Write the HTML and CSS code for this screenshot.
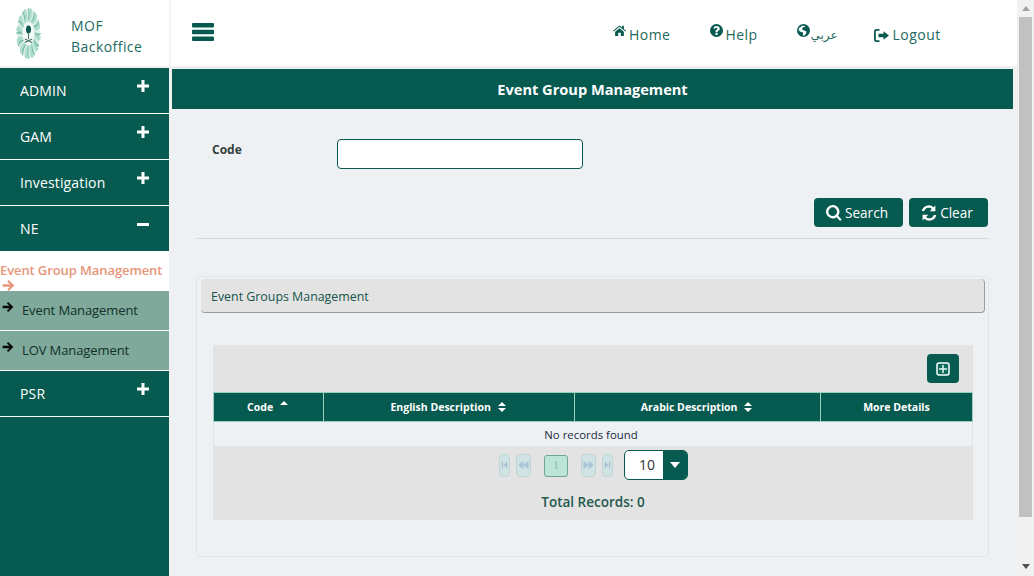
FILE: index.html
```html
<!DOCTYPE html>
<html lang="en">
<head>
<meta charset="utf-8">
<title>Event Group Management</title>
<link rel="stylesheet" href="styles.css">
</head>
<body>
<svg class="defs" width="0" height="0" aria-hidden="true">
  <defs>
    <symbol id="i-plus" viewBox="0 0 12 12"><path d="M4.500 0h3v4.500H12v3H7.500V12h-3V7.500H0v-3h4.500z"/></symbol>
    <symbol id="i-arrow" viewBox="0 0 12 12"><path d="M6.200 1l-1.300 1.300 2.500 2.500H.6v2.400h6.800l-2.500 2.500L6.200 11 11.400 6z"/></symbol>
    <path id="ray" d="M0 -12 C6 -16 9 -22 8 -28 L3 -30 C4 -23 2 -17 0 -12z"/>
    <path id="ray2" d="M-2 -13 C3 -17 4 -24 1 -29 L-1 -29.500 C1 -24 0 -18 -2 -13z"/>
  </defs>
</svg>
<div class="viewport">
  <div class="app">
    <header class="topbar">
      <div class="brand">
        <svg class="logo" viewBox="-15 -30 30 60" aria-hidden="true">
          <ellipse cx="0" cy="0" rx="12.500" ry="27.500" fill="#d3ece3"/>
          <g transform="scale(.46 .96)">
            <g fill="#a9dccb">
              <use href="#ray"/><use href="#ray" transform="rotate(30)"/><use href="#ray" transform="rotate(60)"/><use href="#ray" transform="rotate(90)"/><use href="#ray" transform="rotate(120)"/><use href="#ray" transform="rotate(150)"/><use href="#ray" transform="rotate(180)"/><use href="#ray" transform="rotate(210)"/><use href="#ray" transform="rotate(240)"/><use href="#ray" transform="rotate(270)"/><use href="#ray" transform="rotate(300)"/><use href="#ray" transform="rotate(330)"/>
            </g>
            <g fill="#74bba4">
              <use href="#ray2"/><use href="#ray2" transform="rotate(30)"/><use href="#ray2" transform="rotate(60)"/><use href="#ray2" transform="rotate(90)"/><use href="#ray2" transform="rotate(120)"/><use href="#ray2" transform="rotate(150)"/><use href="#ray2" transform="rotate(180)"/><use href="#ray2" transform="rotate(210)"/><use href="#ray2" transform="rotate(240)"/><use href="#ray2" transform="rotate(270)"/><use href="#ray2" transform="rotate(300)"/><use href="#ray2" transform="rotate(330)"/>
            </g>
          </g>
          <ellipse cx="0" cy="0" rx="6.500" ry="13" fill="#f4f9f7"/>
          <ellipse cx="0" cy="-4.500" rx="2.800" ry="4.500" fill="#0c5a50"/>
          <path d="M0 0v6M-4 10l8-4M4 10l-8-4" stroke="#4b736a" stroke-width="1.200" fill="none"/>
        </svg>
        <div class="brand-name">MOF<br>Backoffice</div>
      </div>
      <div class="topnav">
        <svg class="burger" viewBox="0 0 22 18" aria-hidden="true"><path d="M1 0h20a1 1 0 0 1 1 1v2.500a1 1 0 0 1-1 1H1a1 1 0 0 1-1-1V1a1 1 0 0 1 1-1zM1 6.800h20a1 1 0 0 1 1 1v2.500a1 1 0 0 1-1 1H1a1 1 0 0 1-1-1V7.800a1 1 0 0 1 1-1zM1 13.500h20a1 1 0 0 1 1 1V17a1 1 0 0 1-1 1H1a1 1 0 0 1-1-1v-2.500a1 1 0 0 1 1-1z"/></svg>
        <nav class="links">
          <a class="link link-home">
            <svg class="nav-ico" viewBox="0 0 14 12" aria-hidden="true"><path d="M7 0.500L0 6.300l.7.9L7 2l6.300 5.200.7-.9-2.300-1.900V1h-1.900v1.800zM2.300 7.400V12h3.300V8.500h2.800V12h3.300V7.400L7 3.500z"/></svg>
            <span>Home</span>
          </a>
          <a class="link link-help">
            <svg class="nav-ico" viewBox="0 0 12 12" aria-hidden="true"><path fill-rule="evenodd" d="M6 0a6 6 0 1 1 0 12A6 6 0 0 1 6 0zM5 8.300v1.800h2V8.300zM6 1.900C4.500 1.900 3.500 2.700 3.200 3.900l1.400.6c.2-.7.600-1 1.300-1 .6 0 1 .3 1 .7 0 .5-.4.700-.9 1C5.400 5.600 5 6.100 5 6.800v.7h2v-.4c0-.4.300-.6.800-.9.700-.4 1.200-1 1.200-1.900 0-1.400-1.300-2.400-3-2.400z"/></svg>
            <span>Help</span>
          </a>
          <a class="link link-lang">
            <svg class="nav-ico" viewBox="0 0 12 12" aria-hidden="true"><path fill-rule="evenodd" d="M6 0a6 6 0 1 1 0 12A6 6 0 0 1 6 0zM4.500 1.500L3.200 3 1.800 3.600 1.500 5.800l1.700 1.400 1.800.2.700 1.500-.4 1.700 1.500.3 1.600-2.100.3-1.800-1.900-1.100-1.600-.4-.6-1L5.800 3l1.800-.4-.6-1z"/></svg>
            <span class="arabic" lang="ar">عربي</span>
          </a>
          <a class="link link-out">
            <svg class="nav-ico nav-ico-out" viewBox="0 0 15 13" aria-hidden="true"><path d="M5.500 0H2.500A2.500 2.500 0 0 0 0 2.500v8A2.500 2.500 0 0 0 2.500 13h3v-1.800h-3a.7.7 0 0 1-.7-.7v-8a.7.7 0 0 1 .7-.7h3zM9.500 2.200v2.500H4.500v3.600h5v2.500L15 6.500z"/></svg>
            <span>Logout</span>
          </a>
        </nav>
      </div>
    </header>
    <div class="body-row">
      <aside class="sidebar">
        <div class="menu-item"><span>ADMIN</span><svg class="pm"><use href="#i-plus"/></svg></div>
        <div class="menu-item"><span>GAM</span><svg class="pm"><use href="#i-plus"/></svg></div>
        <div class="menu-item"><span>Investigation</span><svg class="pm"><use href="#i-plus"/></svg></div>
        <div class="menu-item menu-open"><span>NE</span><span class="minus"></span></div>
        <div class="sub-active">
          <div>Event Group Management</div>
          <svg class="sub-arrow-active"><use href="#i-arrow"/></svg>
        </div>
        <div class="sub-item"><svg class="sub-arrow"><use href="#i-arrow"/></svg><span>Event Management</span></div>
        <div class="sub-item"><svg class="sub-arrow"><use href="#i-arrow"/></svg><span>LOV Management</span></div>
        <div class="menu-item"><span>PSR</span><svg class="pm"><use href="#i-plus"/></svg></div>
      </aside>
      <main class="main">
        <h1 class="page-title">Event Group Management</h1>
        <div class="content">
          <div class="form-row">
            <label class="form-label" for="code">Code</label>
            <input class="form-input" id="code" type="text">
          </div>
          <div class="actions">
            <button class="btn btn-search">
              <svg class="btn-ico" viewBox="0 0 15 15" aria-hidden="true"><path fill-rule="evenodd" d="M6.300 0a6.300 6.300 0 0 1 5 10.100l3.400 3.400-1.400 1.400-3.400-3.400A6.300 6.300 0 1 1 6.300 0zm0 2.200a4.100 4.100 0 1 0 0 8.200 4.100 4.100 0 0 0 0-8.200z"/></svg>
              Search
            </button>
            <button class="btn btn-clear">
              <svg class="btn-ico" viewBox="0 0 15 15" aria-hidden="true"><path d="M13.500.5v5.300H8.200l2-2A4.300 4.300 0 0 0 3 5.700H.8A6.500 6.500 0 0 1 11.800 2.200zM1.500 14.500V9.200h5.300l-2 2a4.300 4.300 0 0 0 7.200-1.900h2.200A6.500 6.500 0 0 1 3.200 12.800z"/></svg>
              Clear
            </button>
          </div>
          <hr class="rule">
          <section class="panel">
            <div class="panel-head">Event Groups Management</div>
            <div class="panel-body">
              <div class="grid-toolbar">
                <button class="btn-add" aria-label="Add">
                  <svg viewBox="0 0 14 14" width="14" height="14" aria-hidden="true"><rect x="1" y="1" width="12" height="12" rx="2" fill="#0f6a5e" stroke="#fff" stroke-width="1.500"/><path d="M7 3v8M3 7h8" stroke="#e6f6f1" stroke-width="1.500"/></svg>
                </button>
              </div>
              <table class="grid">
                <thead>
                  <tr>
                    <th class="col-code">Code <span class="sort sort-up"></span></th>
                    <th class="col-en">English Description <span class="sort sort-both"></span></th>
                    <th class="col-ar">Arabic Description <span class="sort sort-both"></span></th>
                    <th class="col-more">More Details</th>
                  </tr>
                </thead>
                <tbody>
                  <tr><td colspan="4">No records found</td></tr>
                </tbody>
              </table>
              <div class="pager">
                <div class="pager-row">
                  <span class="pg pg-edge pg-first"><svg viewBox="0 0 10 12"><path d="M1 1h2v10H1zM9 1v10L3.500 6z"/></svg></span>
                  <span class="pg pg-step pg-prev"><svg viewBox="0 0 12 12"><path d="M6 1v10L0.500 6zM11.500 1v10L6 6z"/></svg></span>
                  <span class="pg-num">1</span>
                  <span class="pg pg-step pg-next"><svg viewBox="0 0 12 12"><path d="M6 1v10l5.500-5zM.5 1v10L6 6z"/></svg></span>
                  <span class="pg pg-edge pg-last"><svg viewBox="0 0 10 12"><path d="M9 1H7v10h2zM1 1v10l5.500-5z"/></svg></span>
                  <div class="rows-select"><span class="rows-value">10</span><span class="rows-btn"><span class="caret"></span></span></div>
                </div>
                <div class="total">Total Records: 0</div>
              </div>
            </div>
          </section>
        </div>
      </main>
    </div>
  </div>
  <div class="scrollbar" aria-hidden="true">
    <span class="sb-up"></span>
    <span class="sb-thumb"></span>
    <span class="sb-down"></span>
  </div>
</div>
</body>
</html>
```
FILE: styles.css
```css
* { box-sizing: border-box; }
html, body { margin: 0; height: 100%; overflow: hidden; }
body { font-family: "Open Sans", "Noto Sans", sans-serif; font-size: 14px; color: #075a50; background: #fff; }
.defs { position: absolute; }
.viewport { display: flex; height: 576px; width: 1034px; }
.app { width: 1017px; display: flex; flex-direction: column; background: #f1f1f1; }
.scrollbar { width: 17px; display: flex; flex-direction: column; align-items: center; background: #f1f1f1; }
.sb-up { width: 0; height: 0; margin: 6px 0 6px; border: 4px solid transparent; border-top: 0; border-bottom: 5px solid #a3a3a3; }
.sb-thumb { width: 13px; height: 500px; background: #c1c1c1; }
.sb-down { width: 0; height: 0; margin-top: 47px; border: 4px solid transparent; border-bottom: 0; border-top: 5px solid #505050; }

.topbar { height: 68px; flex: none; display: flex; background: #fff; border-bottom: 2px solid #eeeeee; }
.brand { width: 171px; flex: none; display: flex; align-items: center; padding-left: 15px; border-right: 2px solid #f4f4f4; }
.logo { width: 27px; height: 57px; flex: none; margin-right: 29px; }
.brand-name { font-size: 14px; line-height: 21px; letter-spacing: .45px; color: #1e6a60; font-weight: 500; padding-top: 6px; }
.topnav { flex: 1; display: flex; align-items: center; padding-left: 21px; }
.burger { width: 22px; height: 18px; fill: #075a50; margin-bottom: 2px; }
.links { display: flex; margin-left: 399px; align-items: flex-start; }
.link { display: flex; align-items: flex-start; font-size: 14px; letter-spacing: .45px; color: #1e6a60; }
.link span { line-height: 20px; margin-top: 4px; }
.nav-ico { width: 13px; height: 13px; fill: #075a50; margin-right: 3px; margin-top: 3px; flex: none; }
.link-help { margin-left: 40px; }
.link-help .nav-ico { margin-right: 2px; }
.link-lang { margin-left: 40px; }
.link-out { margin-left: 36px; }
.arabic { font-family: "DejaVu Sans", "Noto Sans", sans-serif; font-size: 12px; letter-spacing: 0; }
.link-lang .nav-ico { margin-right: 0; }
.nav-ico-out { width: 15px; height: 13px; margin-top: 8px; margin-right: 4px; }

.body-row { flex: 1; display: flex; min-height: 0; }
.sidebar { width: 169px; flex: none; background: #075a50; color: #fff; }
.menu-item { height: 46px; display: flex; align-items: flex-start; justify-content: space-between; padding: 13px 20px 0 20px; border-bottom: 1px solid #fff; font-size: 14px; letter-spacing: .15px; line-height: 19px; }
.menu-open { height: 45px; border-bottom: 0; }
.pm { width: 12px; height: 12px; fill: #fff; margin-top: -1px; }
.minus { width: 12px; height: 3px; background: #fff; margin-top: 4px; }
.sub-active { height: 40px; background: #fff; color: #e8957a; font-size: 13px; letter-spacing: -.1px; font-weight: 600; line-height: 19px; padding-top: 10px; white-space: nowrap; overflow: hidden; }
.sub-arrow-active { display: block; width: 13px; height: 13px; fill: #e8957a; margin: -1px 0 0 2px; }
.sub-item { height: 40px; background: #7fa99a; border-bottom: 1px solid #fff; display: flex; align-items: flex-start; color: #10302a; font-size: 13px; letter-spacing: -.1px; line-height: 18px; padding: 10px 0 0 2px; }
.sub-arrow { width: 12px; height: 12px; fill: #0a0a0a; margin: 0 8px 0 0; flex: none; }

.main { flex: 1; min-width: 0; margin: 0 4px 0 3px; display: flex; flex-direction: column; background: #edf1f4; }
.page-title { margin: 1px 0 0; height: 40px; flex: none; background: #075a50; color: #fff; font-size: 14.6px; font-weight: 700; line-height: 40px; text-align: center; }
.content { flex: 1; padding: 30px 24px 0; }
.form-row { display: flex; align-items: flex-start; padding-left: 16px; }
.form-label { width: 125px; font-size: 12px; font-weight: 700; line-height: 20px; padding-top: 1px; color: #333f3c; }
.form-input { width: 246px; height: 30px; background: #fff; border: 1px solid #075a50; border-radius: 4px; }
.actions { display: flex; justify-content: flex-end; gap: 6px; margin-top: 29px; padding-right: 1px; }
.btn { height: 29px; border: 0; border-radius: 4px; background: #075a50; color: #fff; font: 13.6px "Open Sans", sans-serif; padding: 0 3px 0 0; display: flex; align-items: center; justify-content: center; gap: 3px; }
.btn-search { width: 89px; }
.btn-clear { width: 79px; }
.btn-ico { width: 16px; height: 16px; fill: #fff; }
.rule { margin: 11px 0 0; border: 0; border-top: 1px solid #d5d9dc; }
.panel { margin-top: 37px; height: 281px; border: 1px solid #e2e6e9; border-radius: 4px; padding: 2px 3px 0 4px; }
.panel-head { height: 34px; background: #e3e3e3; border-radius: 4px; border-right: 1px solid #9b9b9b; border-bottom: 1px solid #9b9b9b; padding-left: 10px; font-size: 12.4px; line-height: 35px; color: #17544c; }
.panel-body { padding: 32px 12px 0 12px; }
.grid-toolbar { height: 47px; background: #e3e3e3; display: flex; justify-content: flex-end; padding: 9px 14px 0 0; }
.btn-add { width: 32px; height: 29px; border: 0; border-radius: 4px; background: #075a50; padding: 0; display: flex; align-items: center; justify-content: center; }
.grid { width: 760px; border-collapse: collapse; table-layout: fixed; }
.grid th { height: 29px; padding: 0 2px 0 0; background: #075a50; color: #fff; font-size: 10.5px; font-weight: 700; border: 1px solid #9ad0bd; text-align: center; }
.grid .col-more { padding: 0; }
.col-code { width: 110px; }
.col-en { width: 251px; }
.col-ar { width: 246px; }
.grid td { height: 25px; padding: 1px 4px 0 0; text-align: center; font-size: 11.4px; color: #1c2b3a; border: 1px solid #d8e6ee; border-top: 0; background: #edf1f4; }
.sort { display: inline-block; width: 8px; height: 10px; margin-left: 4px; position: relative; vertical-align: -1px; }
.sort::before, .sort::after { content: ""; position: absolute; left: 0; border: 4px solid transparent; }
.sort::before { top: 0; border-top: 0; border-bottom: 4px solid #fff; }
.sort-both::after { bottom: 0; border-bottom: 0; border-top: 4px solid #fff; }
.sort-up::before { top: -1px; }
.pager { height: 73px; background: #e3e3e3; display: flex; flex-direction: column; align-items: center; }
.pager-row { display: flex; align-items: center; height: 36px; padding-left: 1px; }
.pg { height: 23px; border: 1px solid #c0d5d5; border-radius: 4px; background: #d0e3e3; display: flex; align-items: center; justify-content: center; }
.pg svg { width: 9px; height: 12px; fill: #a9c4d9; }
.pg-edge { width: 11px; }
.pg-edge svg { width: 7px; }
.pg-step { width: 15px; }
.pg-step svg { width: 11px; }
.pg-prev { margin-left: 6px; }
.pg-num { width: 24px; height: 22px; margin: 1px 13px 0 13px; border: 1px solid #6fa596; border-radius: 3px; background: #bde5d7; color: #8dbdae; font: 12px "Liberation Serif", serif; display: flex; align-items: center; justify-content: center; }
.pg-last { margin-left: 6px; }
.rows-select { width: 64px; height: 30px; margin-left: 11px; display: flex; border: 1px solid #075a50; border-radius: 5px; background: #fff; overflow: hidden; }
.rows-value { flex: 1; font-size: 14px; line-height: 28px; color: #333; text-align: center; padding-left: 6px; }
.rows-btn { width: 24px; background: #075a50; display: flex; align-items: center; justify-content: center; }
.caret { width: 0; height: 0; border: 5px solid transparent; border-bottom: 0; border-top: 6px solid #fff; }
.total { margin-top: 9px; font-size: 13.500px; font-weight: 600; line-height: 20px; color: #24594f; }
```
